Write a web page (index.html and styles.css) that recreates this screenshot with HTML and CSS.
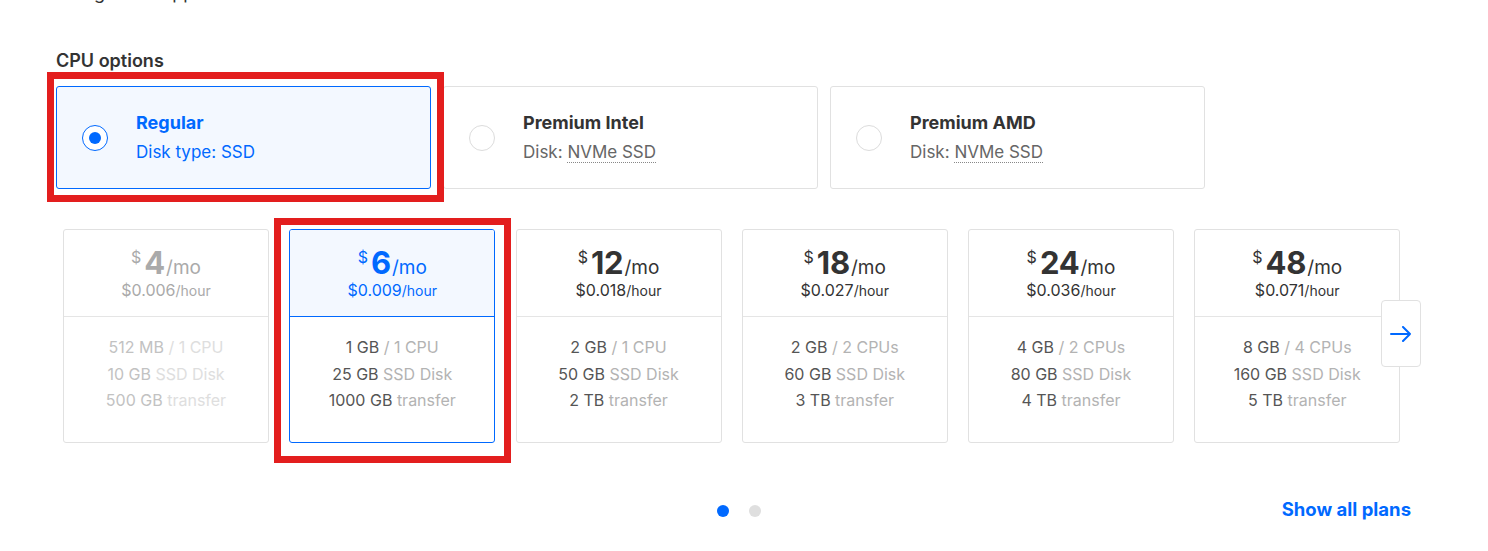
FILE: index.html
```html
<!DOCTYPE html>
<html lang="en">
<head>
<meta charset="utf-8">
<title>CPU options</title>
<link rel="stylesheet" href="styles.css">
</head>
<body>
<main class="page">
  <p class="prev">Using these apps</p>
  <h3 class="label">CPU options</h3>
  <div class="cpu-row">
    <div class="cpu-card selected">
      <span class="radio"><span class="radio-dot"></span></span>
      <div class="cpu-text">
        <div class="cpu-title">Regular</div>
        <div class="cpu-sub">Disk type: SSD</div>
      </div>
    </div>
    <div class="cpu-card">
      <span class="radio"></span>
      <div class="cpu-text">
        <div class="cpu-title">Premium Intel</div>
        <div class="cpu-sub">Disk: <span class="dotted">NVMe SSD</span></div>
      </div>
    </div>
    <div class="cpu-card">
      <span class="radio"></span>
      <div class="cpu-text">
        <div class="cpu-title">Premium AMD</div>
        <div class="cpu-sub">Disk: <span class="dotted">NVMe SSD</span></div>
      </div>
    </div>
  </div>

  <div class="plans">
    <div class="plan-track">
      <div class="plan-card disabled">
        <div class="plan-top">
          <div class="price"><span class="cur">$</span><span class="amt">4</span><span class="per">/mo</span></div>
          <div class="hour">$0.006<span class="hunit">/hour</span></div>
        </div>
        <div class="plan-specs">
          <div>512 MB <span class="muted">/ 1 CPU</span></div>
          <div>10 GB <span class="muted">SSD Disk</span></div>
          <div>500 GB <span class="muted">transfer</span></div>
        </div>
      </div>
      <div class="plan-card active">
        <div class="plan-top">
          <div class="price"><span class="cur">$</span><span class="amt">6</span><span class="per">/mo</span></div>
          <div class="hour">$0.009<span class="hunit">/hour</span></div>
        </div>
        <div class="plan-specs">
          <div>1 GB <span class="muted">/ 1 CPU</span></div>
          <div>25 GB <span class="muted">SSD Disk</span></div>
          <div>1000 GB <span class="muted">transfer</span></div>
        </div>
      </div>
      <div class="plan-card">
        <div class="plan-top">
          <div class="price"><span class="cur">$</span><span class="amt">12</span><span class="per">/mo</span></div>
          <div class="hour">$0.018<span class="hunit">/hour</span></div>
        </div>
        <div class="plan-specs">
          <div>2 GB <span class="muted">/ 1 CPU</span></div>
          <div>50 GB <span class="muted">SSD Disk</span></div>
          <div>2 TB <span class="muted">transfer</span></div>
        </div>
      </div>
      <div class="plan-card">
        <div class="plan-top">
          <div class="price"><span class="cur">$</span><span class="amt">18</span><span class="per">/mo</span></div>
          <div class="hour">$0.027<span class="hunit">/hour</span></div>
        </div>
        <div class="plan-specs">
          <div>2 GB <span class="muted">/ 2 CPUs</span></div>
          <div>60 GB <span class="muted">SSD Disk</span></div>
          <div>3 TB <span class="muted">transfer</span></div>
        </div>
      </div>
      <div class="plan-card">
        <div class="plan-top">
          <div class="price"><span class="cur">$</span><span class="amt">24</span><span class="per">/mo</span></div>
          <div class="hour">$0.036<span class="hunit">/hour</span></div>
        </div>
        <div class="plan-specs">
          <div>4 GB <span class="muted">/ 2 CPUs</span></div>
          <div>80 GB <span class="muted">SSD Disk</span></div>
          <div>4 TB <span class="muted">transfer</span></div>
        </div>
      </div>
      <div class="plan-card">
        <div class="plan-top">
          <div class="price"><span class="cur">$</span><span class="amt">48</span><span class="per">/mo</span></div>
          <div class="hour">$0.071<span class="hunit">/hour</span></div>
        </div>
        <div class="plan-specs">
          <div>8 GB <span class="muted">/ 4 CPUs</span></div>
          <div>160 GB <span class="muted">SSD Disk</span></div>
          <div>5 TB <span class="muted">transfer</span></div>
        </div>
      </div>
    </div>
    <button class="next" aria-label="Next plans">
      <svg width="22" height="16" viewBox="0 0 22 16" fill="none" stroke="#0069ff" stroke-width="2" stroke-linecap="round" stroke-linejoin="round"><path d="M1 8h19M13 1l7 7-7 7"/></svg>
    </button>
  </div>

  <div class="footer">
    <div class="dots"><span class="dot on"></span><span class="dot"></span></div>
    <a class="show-all" href="#">Show all plans</a>
  </div>

  <div class="hl hl-cpu"></div>
  <div class="hl hl-plan"></div>
</main>
</body>
</html>
```

FILE: styles.css
```css
html, body {
  margin: 0;
  padding: 0;
  background: #fff;
}

body {
  font-family: Inter, "Open Sans", "Liberation Sans", sans-serif;
  color: #333;
  overflow: hidden;
}

.page {
  position: relative;
  display: flow-root;
  width: 1488px;
  height: 551px;
  padding-left: 56px;
  box-sizing: border-box;
}

.prev {
  margin: -18px 0 0 0;
  font-size: 18px;
  line-height: 22px;
  color: #333;
}

.label {
  margin: 46px 0 14px 0;
  font-size: 18px;
  line-height: 22px;
  font-weight: 600;
  color: #333;
}

.cpu-row {
  display: flex;
  gap: 12px;
}

.cpu-card {
  width: 375px;
  height: 103px;
  box-sizing: border-box;
  border: 1px solid #e1e1e1;
  border-radius: 3px;
  display: flex;
  align-items: center;
  padding-left: 25px;
  background: #fff;
}

.cpu-card.selected {
  background: #f3f8ff;
  border-color: #0069ff;
}

.radio {
  width: 26px;
  height: 26px;
  box-sizing: border-box;
  border-radius: 50%;
  border: 1px solid #dcdcdc;
  background: #fff;
  display: flex;
  align-items: center;
  justify-content: center;
  flex: none;
}

.selected .radio {
  border-color: #0069ff;
}

.radio-dot {
  width: 12px;
  height: 12px;
  border-radius: 50%;
  background: #0069ff;
}

.cpu-text {
  margin-left: 28px;
  display: flex;
  flex-direction: column;
  gap: 7px;
}

.cpu-title {
  font-size: 18px;
  line-height: 22px;
  font-weight: 700;
  color: #333;
}

.cpu-sub {
  font-size: 17px;
  line-height: 22px;
  color: #666;
}

.selected .cpu-title,
.selected .cpu-sub {
  color: #0069ff;
}

.dotted {
  border-bottom: 1px dotted #888;
}

.plans {
  position: relative;
  margin-top: 40px;
  padding-left: 7px;
}

.plan-track {
  display: flex;
  gap: 20.25px;
}

.plan-card {
  width: 206px;
  height: 214px;
  box-sizing: border-box;
  border: 1px solid #e1e1e1;
  border-radius: 3px;
  display: flex;
  flex-direction: column;
  overflow: hidden;
  flex: none;
}

.plan-top {
  height: 87px;
  box-sizing: border-box;
  border-bottom: 1px solid #e5e5e5;
  display: flex;
  flex-direction: column;
  align-items: center;
  padding-top: 16px;
}

.price {
  display: flex;
  align-items: baseline;
  color: #333;
  line-height: 34px;
}

.cur {
  font-size: 16px;
  align-self: flex-start;
  line-height: 22px;
  margin-right: 3px;
}

.amt {
  font-size: 31px;
  font-weight: 700;
  letter-spacing: -0.2px;
}

.per {
  font-size: 19px;
  margin-left: 1px;
}

.hour {
  font-size: 16px;
  line-height: 18px;
  margin-top: -4px;
  color: #333;
}

.hunit {
  font-size: 14px;
}

.plan-specs {
  display: flex;
  flex-direction: column;
  align-items: center;
  padding-top: 17px;
  font-size: 16px;
  line-height: 26.5px;
  color: #555;
}

.muted {
  color: #b3b3b3;
}

.plan-card.disabled .price,
.plan-card.disabled .hour {
  color: #aaa;
}

.plan-card.disabled .plan-specs {
  color: #c2c2c2;
}

.plan-card.disabled .muted {
  color: #dedede;
}

.plan-card.active {
  border-color: #0069ff;
}

.plan-card.active .plan-top {
  background: #f3f8ff;
  border-bottom-color: #0069ff;
}

.plan-card.active .price,
.plan-card.active .hour {
  color: #0069ff;
}

.next {
  position: absolute;
  left: 1325px;
  top: 71px;
  width: 40px;
  height: 67px;
  box-sizing: border-box;
  background: #fff;
  border: 1px solid #e1e1e1;
  border-radius: 4px;
  padding: 0;
  display: flex;
  align-items: center;
  justify-content: center;
  cursor: pointer;
}

.footer {
  position: relative;
  margin-top: 56px;
  width: 1366px;
  height: 24px;
  display: flex;
  align-items: center;
  justify-content: center;
}

.dots {
  display: flex;
  gap: 20px;
}

.dot {
  width: 12px;
  height: 12px;
  border-radius: 50%;
  background: #dfdfdf;
}

.dot.on {
  background: #0069ff;
}

.show-all {
  position: absolute;
  right: 11px;
  top: -2px;
  font-size: 18.5px;
  line-height: 24px;
  font-weight: 700;
  color: #0069ff;
  text-decoration: none;
}

.hl {
  position: absolute;
  border: 7px solid #e31e1e;
  box-sizing: border-box;
  pointer-events: none;
}

.hl-cpu {
  left: 47px;
  top: 72px;
  width: 397px;
  height: 130px;
}

.hl-plan {
  left: 274px;
  top: 218px;
  width: 237px;
  height: 245px;
}
```
